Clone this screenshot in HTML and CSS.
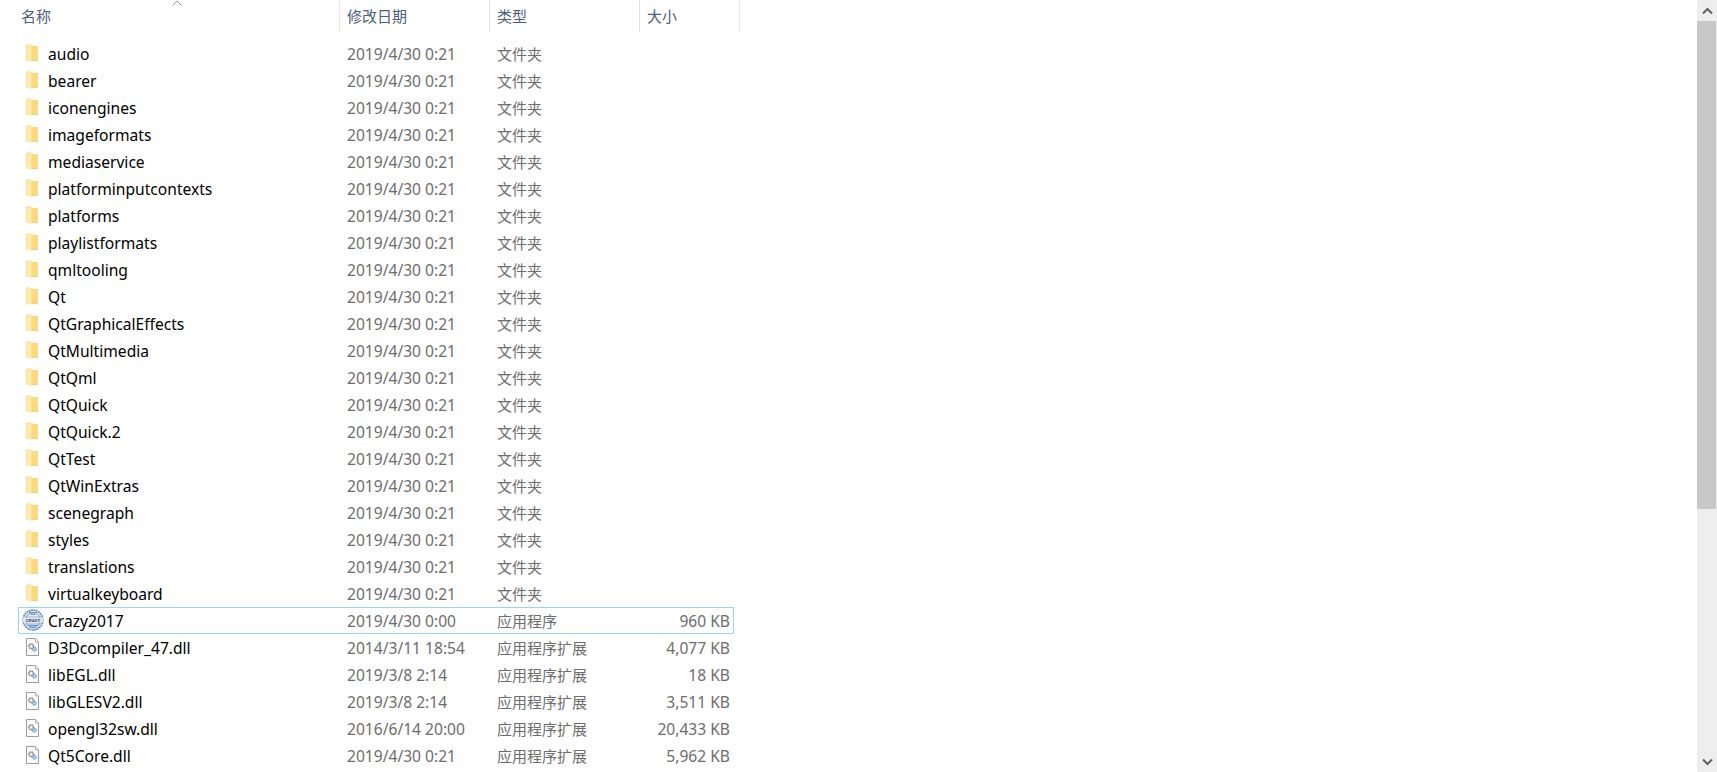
FILE: index.html
```html
<!DOCTYPE html>
<html lang="zh-CN">
<head>
<meta charset="utf-8">
<title>Crazy2017</title>
<link rel="stylesheet" href="styles.css">
</head>
<body>
<svg class="defs" width="0" height="0" aria-hidden="true">
  <defs>
    <linearGradient id="fg" x1="0" y1="0" x2="1" y2="0">
      <stop offset="0" stop-color="#fdeeb8"/>
      <stop offset="1" stop-color="#fde9a4"/>
    </linearGradient>
    <symbol id="folder" viewBox="0 0 20 20">
      <path d="M2 1.5h4.5l1.5 1.5h6v14.5H2z" fill="#fbd97f"/>
      <path d="M2 2l5.5.8V19l-3.7-1.5H2z" fill="url(#fg)"/>
      <path d="M2.2 2v15.3" stroke="#ecd698" stroke-width=".7" fill="none"/>
      <path d="M7.5 17.5h6.5" stroke="#ecc772" stroke-width=".8" fill="none"/>
    </symbol>
    <symbol id="dll" viewBox="0 0 20 20">
      <path d="M2.5 1.5h9l3 3.5v13.5h-12z" fill="#fcfcfc" stroke="#9c9c9c"/>
      <path d="M11.5 1.5v3.5h3" fill="#eee" stroke="#b5b5b5"/>
      <circle cx="7.2" cy="9.4" r="2.3" fill="none" stroke="#858585" stroke-width="1.7" stroke-dasharray="1.4 .6"/>
      <circle cx="10.4" cy="12.2" r="2" fill="#a9cfe9" stroke="#6f9fc2" stroke-width=".8"/>
    </symbol>
    <symbol id="exe" viewBox="0 0 22 22">
      <circle cx="11" cy="11" r="10.5" fill="#d3dfef"/>
      <circle cx="11" cy="11" r="10" fill="none" stroke="#5d83bd" stroke-width="1.6" stroke-dasharray="1.6 .9"/>
      <circle cx="11" cy="11" r="7.2" fill="#eef2f8" stroke="#7c9acb" stroke-width=".8"/>
      <path d="M3 8h16M4 15h14" stroke="#8aa5cf" stroke-width="1"/>
      <rect x=".5" y="8.6" width="21" height="4.8" fill="#dfe4ec"/>
      <text x="11" y="12.7" text-anchor="middle" class="exe-text">CRAZY</text>
      <path d="M6 16.5h10M7.5 18.3h7M7 3.6h8M8.5 5.4h5" stroke="#5d83bd" stroke-width=".9"/>
    </symbol>
  </defs>
</svg>
<div class="window">
  <main class="pane">
    <div class="header">
      <div class="hcell hname">名称</div>
      <div class="hcell hdate">修改日期</div>
      <div class="hcell htype">类型</div>
      <div class="hcell hsize">大小</div>
      <svg class="sort" width="10" height="6" viewBox="0 0 10 6"><path d="M.5 5.5L5 1l4.5 4.5" fill="none" stroke="#8f9aa8" stroke-width="1"/></svg>
    </div>
    <div class="list">
      <div class="row"><svg class="icon"><use href="#folder"/></svg><span class="name">audio</span><span class="cell">2019/4/30 0:21</span><span class="type">文件夹</span><span class="size"></span></div>
      <div class="row"><svg class="icon"><use href="#folder"/></svg><span class="name">bearer</span><span class="cell">2019/4/30 0:21</span><span class="type">文件夹</span><span class="size"></span></div>
      <div class="row"><svg class="icon"><use href="#folder"/></svg><span class="name">iconengines</span><span class="cell">2019/4/30 0:21</span><span class="type">文件夹</span><span class="size"></span></div>
      <div class="row"><svg class="icon"><use href="#folder"/></svg><span class="name">imageformats</span><span class="cell">2019/4/30 0:21</span><span class="type">文件夹</span><span class="size"></span></div>
      <div class="row"><svg class="icon"><use href="#folder"/></svg><span class="name">mediaservice</span><span class="cell">2019/4/30 0:21</span><span class="type">文件夹</span><span class="size"></span></div>
      <div class="row"><svg class="icon"><use href="#folder"/></svg><span class="name">platforminputcontexts</span><span class="cell">2019/4/30 0:21</span><span class="type">文件夹</span><span class="size"></span></div>
      <div class="row"><svg class="icon"><use href="#folder"/></svg><span class="name">platforms</span><span class="cell">2019/4/30 0:21</span><span class="type">文件夹</span><span class="size"></span></div>
      <div class="row"><svg class="icon"><use href="#folder"/></svg><span class="name">playlistformats</span><span class="cell">2019/4/30 0:21</span><span class="type">文件夹</span><span class="size"></span></div>
      <div class="row"><svg class="icon"><use href="#folder"/></svg><span class="name">qmltooling</span><span class="cell">2019/4/30 0:21</span><span class="type">文件夹</span><span class="size"></span></div>
      <div class="row"><svg class="icon"><use href="#folder"/></svg><span class="name">Qt</span><span class="cell">2019/4/30 0:21</span><span class="type">文件夹</span><span class="size"></span></div>
      <div class="row"><svg class="icon"><use href="#folder"/></svg><span class="name">QtGraphicalEffects</span><span class="cell">2019/4/30 0:21</span><span class="type">文件夹</span><span class="size"></span></div>
      <div class="row"><svg class="icon"><use href="#folder"/></svg><span class="name">QtMultimedia</span><span class="cell">2019/4/30 0:21</span><span class="type">文件夹</span><span class="size"></span></div>
      <div class="row"><svg class="icon"><use href="#folder"/></svg><span class="name">QtQml</span><span class="cell">2019/4/30 0:21</span><span class="type">文件夹</span><span class="size"></span></div>
      <div class="row"><svg class="icon"><use href="#folder"/></svg><span class="name">QtQuick</span><span class="cell">2019/4/30 0:21</span><span class="type">文件夹</span><span class="size"></span></div>
      <div class="row"><svg class="icon"><use href="#folder"/></svg><span class="name">QtQuick.2</span><span class="cell">2019/4/30 0:21</span><span class="type">文件夹</span><span class="size"></span></div>
      <div class="row"><svg class="icon"><use href="#folder"/></svg><span class="name">QtTest</span><span class="cell">2019/4/30 0:21</span><span class="type">文件夹</span><span class="size"></span></div>
      <div class="row"><svg class="icon"><use href="#folder"/></svg><span class="name">QtWinExtras</span><span class="cell">2019/4/30 0:21</span><span class="type">文件夹</span><span class="size"></span></div>
      <div class="row"><svg class="icon"><use href="#folder"/></svg><span class="name">scenegraph</span><span class="cell">2019/4/30 0:21</span><span class="type">文件夹</span><span class="size"></span></div>
      <div class="row"><svg class="icon"><use href="#folder"/></svg><span class="name">styles</span><span class="cell">2019/4/30 0:21</span><span class="type">文件夹</span><span class="size"></span></div>
      <div class="row"><svg class="icon"><use href="#folder"/></svg><span class="name">translations</span><span class="cell">2019/4/30 0:21</span><span class="type">文件夹</span><span class="size"></span></div>
      <div class="row"><svg class="icon"><use href="#folder"/></svg><span class="name">virtualkeyboard</span><span class="cell">2019/4/30 0:21</span><span class="type">文件夹</span><span class="size"></span></div>
      <div class="row selected"><svg class="icon icon-exe"><use href="#exe"/></svg><span class="name">Crazy2017</span><span class="cell">2019/4/30 0:00</span><span class="type">应用程序</span><span class="size">960 KB</span></div>
      <div class="row"><svg class="icon"><use href="#dll"/></svg><span class="name">D3Dcompiler_47.dll</span><span class="cell">2014/3/11 18:54</span><span class="type">应用程序扩展</span><span class="size">4,077 KB</span></div>
      <div class="row"><svg class="icon"><use href="#dll"/></svg><span class="name">libEGL.dll</span><span class="cell">2019/3/8 2:14</span><span class="type">应用程序扩展</span><span class="size">18 KB</span></div>
      <div class="row"><svg class="icon"><use href="#dll"/></svg><span class="name">libGLESV2.dll</span><span class="cell">2019/3/8 2:14</span><span class="type">应用程序扩展</span><span class="size">3,511 KB</span></div>
      <div class="row"><svg class="icon"><use href="#dll"/></svg><span class="name">opengl32sw.dll</span><span class="cell">2016/6/14 20:00</span><span class="type">应用程序扩展</span><span class="size">20,433 KB</span></div>
      <div class="row"><svg class="icon"><use href="#dll"/></svg><span class="name">Qt5Core.dll</span><span class="cell">2019/4/30 0:21</span><span class="type">应用程序扩展</span><span class="size">5,962 KB</span></div>
    </div>
  </main>
  <aside class="scrollbar">
    <div class="arrow"><svg width="11" height="8" viewBox="0 0 11 8"><path d="M1 6.5l4.5-4.5 4.5 4.5" fill="none" stroke="#606060" stroke-width="2"/></svg></div>
    <div class="thumb"></div>
    <div class="track"></div>
    <div class="arrow"><svg width="11" height="8" viewBox="0 0 11 8"><path d="M1 1.5l4.5 4.5 4.5-4.5" fill="none" stroke="#606060" stroke-width="2"/></svg></div>
  </aside>
</div>
</body>
</html>
```
FILE: styles.css
```css
* { box-sizing: border-box; }
html, body { margin: 0; height: 100%; background: #fff; overflow: hidden; }
body { font: 15.6px/25px "Noto Sans", "Noto Sans CJK SC", sans-serif; }
.defs { position: absolute; }
.window { display: flex; height: 772px; }
.pane { flex: 1; min-width: 0; }

.header { position: relative; display: grid; grid-template-columns: 340px 150px 150px 100px; width: 740px; height: 32px; margin-bottom: 8px; }
.hcell { padding: 3px 0 0 7px; border-right: 1px solid #e5e5e5; color: #4c607a; font-size: 15px; font-family: "Noto Sans CJK SC", sans-serif; }
.hname { padding-left: 21px; }
.sort { position: absolute; left: 172px; top: 0; }

.list { margin-left: 18px; width: 716px; }
.row { display: grid; grid-template-columns: 29px 299px 150px 1fr auto; height: 27px; border: 1px solid transparent; }
.row.selected { border-color: #99d1ff; }
.row span { padding-top: 1px; }
.icon { display: block; width: 20px; height: 20px; margin: 2px 0 0 5px; }
.icon-exe { width: 22px; height: 22px; margin: 1px 0 0 3px; }
.exe-text { font: 700 4.4px Roboto, sans-serif; fill: #38465f; }
.name { color: #000; }
.cell, .size, .type { color: #6d6d6d; }
.type { font-size: 15px; }
.size { padding-right: 3px; text-align: right; }

.scrollbar { display: flex; flex-direction: column; width: 20px; background: #eee; }
.arrow { height: 21px; display: flex; align-items: center; justify-content: center; flex: none; }
.thumb { height: 488px; width: 19px; background: #c8c8c8; flex: none; }
.track { flex: 1; }
```
